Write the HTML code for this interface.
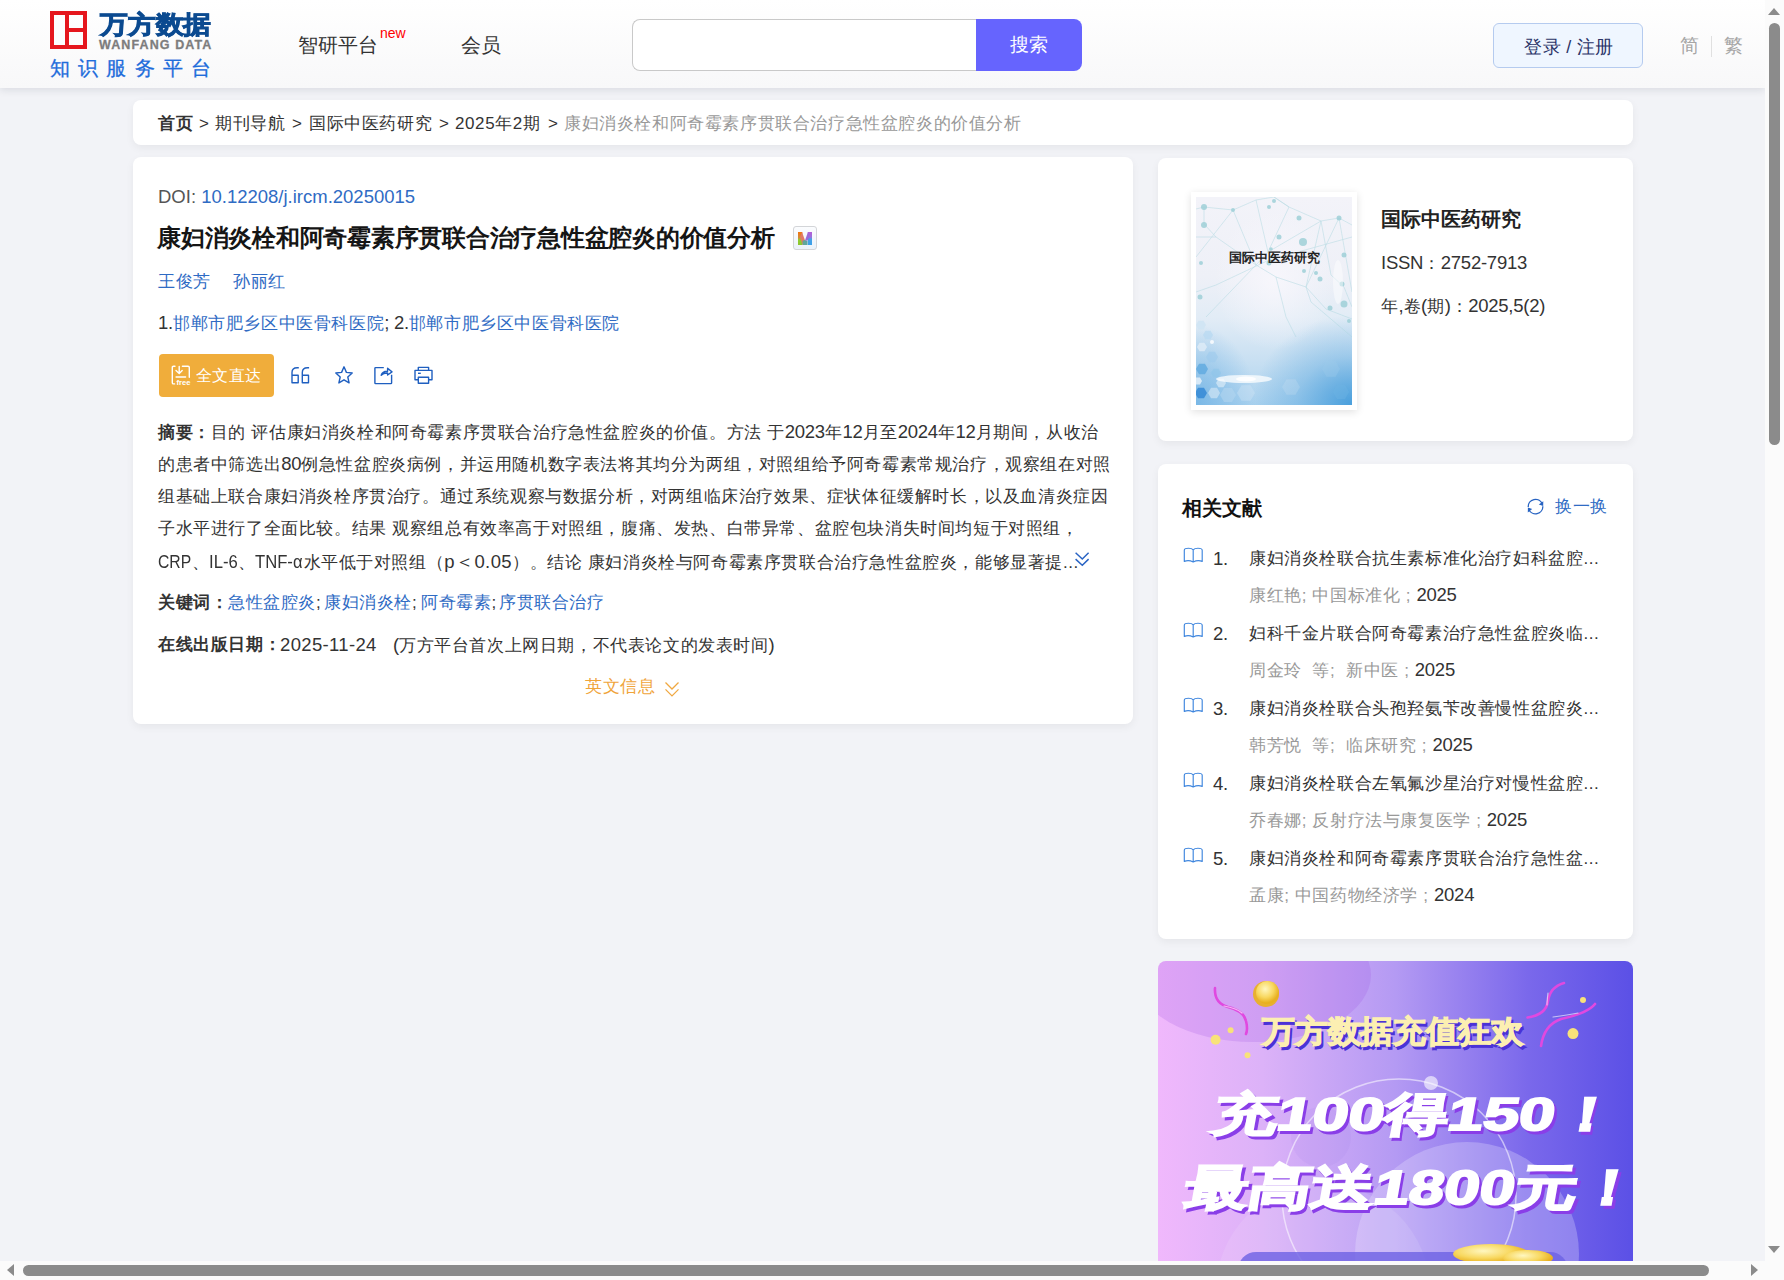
<!DOCTYPE html>
<html><head><meta charset="utf-8">
<style>
*{box-sizing:border-box;margin:0;padding:0}
html,body{width:1784px;height:1280px;overflow:hidden;background:#fbfbfb}
body{font-family:"Liberation Sans",sans-serif;color:#333;position:relative}
#vp{position:absolute;left:0;top:0;width:1765px;height:1261px;overflow:hidden;background:#f2f3f7}
.a{position:absolute;white-space:nowrap}
.hdr{position:absolute;left:0;top:0;width:1765px;height:88px;background:linear-gradient(#fff,#f8f8f9);box-shadow:0 2px 8px rgba(20,30,50,.11)}
.card{position:absolute;background:#fff;border-radius:8px;box-shadow:0 3px 8px rgba(0,0,0,.055)}
.blue{color:#2f6bc4}
.gray{color:#999}
.t17{font-size:17px;letter-spacing:.6px;line-height:20px}
.L{font-size:18.5px;letter-spacing:-.25px}
/* scrollbars */
.sbv{position:absolute;left:1765px;top:0;width:19px;height:1261px;background:#fbfbfb}
.sbh{position:absolute;left:0;top:1261px;width:1765px;height:19px;background:#fbfbfb}
.thumb{position:absolute;background:#8b8b8b;border-radius:6px}
</style></head><body>
<div id="vp">
  <div class="hdr">
    <!-- logo -->
    <div class="a" style="left:50px;top:11px;width:37px;height:38px;border:4px solid #e5161d"></div>
    <div class="a" style="left:65px;top:11px;width:4px;height:38px;background:#e5161d"></div>
    <div class="a" style="left:65px;top:28px;width:22px;height:4px;background:#e5161d"></div>
    <div class="a" style="left:100px;top:8px;font-size:28px;line-height:30px;font-weight:900;color:#0b4a90;letter-spacing:-.2px;-webkit-text-stroke:1px #0b4a90;transform:scaleY(.9);transform-origin:0 100%">万方数据</div>
    <div class="a" style="left:99px;top:38px;font-size:12.5px;line-height:14px;font-weight:bold;color:#7d7d7d;letter-spacing:1.1px;-webkit-text-stroke:.3px #7d7d7d">WANFANG DATA</div>
    <div class="a" style="left:50px;top:57px;font-size:20px;line-height:22px;color:#1f6ddb;letter-spacing:8.2px;-webkit-text-stroke:.3px #1f6ddb">知识服务平台</div>
    <!-- nav -->
    <div class="a" style="left:298px;top:34px;font-size:20px;line-height:22px;color:#333">智研平台</div>
    <div class="a" style="left:380px;top:26px;font-size:14px;line-height:14px;color:#f00">new</div>
    <div class="a" style="left:461px;top:34px;font-size:20px;line-height:22px;color:#333">会员</div>
    <!-- search -->
    <div class="a" style="left:632px;top:19px;width:346px;height:52px;border:1px solid #c9c9c9;border-right:none;border-radius:8px 0 0 8px;background:#fff"></div>
    <div class="a" style="left:976px;top:19px;width:106px;height:52px;border-radius:0 8px 8px 0;background:#6664fe;color:#fff;font-size:19px;line-height:52px;text-align:center">搜索</div>
    <!-- login -->
    <div class="a" style="left:1493px;top:23px;width:150px;height:45px;border:1px solid #b5cbef;border-radius:6px;background:#eff6ff;color:#2b3468;font-size:18px;line-height:46px;text-align:center;letter-spacing:.3px;padding-left:2px">登录 / 注册</div>
    <div class="a" style="left:1680px;top:35px;font-size:19px;line-height:21px;color:#a6a6a6">简</div>
    <div class="a" style="left:1711px;top:36px;width:1px;height:21px;background:#e0e0e0"></div>
    <div class="a" style="left:1724px;top:35px;font-size:19px;line-height:21px;color:#a6a6a6">繁</div>
  </div>

  <!-- breadcrumb -->
  <div class="card" style="left:133px;top:100px;width:1500px;height:45px"></div>
  <div class="a t17" style="left:158px;top:114px"><b>首页</b></div>
  <div class="a t17" style="left:199px;top:114px">&gt;</div>
  <div class="a t17" style="left:215px;top:114px">期刊导航</div>
  <div class="a t17" style="left:292px;top:114px">&gt;</div>
  <div class="a t17" style="left:309px;top:114px">国际中医药研究</div>
  <div class="a t17" style="left:439px;top:114px">&gt;</div>
  <div class="a t17" style="left:455px;top:114px">2025年2期</div>
  <div class="a t17" style="left:548px;top:114px">&gt;</div>
  <div class="a t17 gray" style="left:564px;top:114px">康妇消炎栓和阿奇霉素序贯联合治疗急性盆腔炎的价值分析</div>

  <!-- main card -->
  <div class="card" style="left:133px;top:157px;width:1000px;height:567px"></div>
  <div class="a t17" style="left:158px;top:187px;color:#555"><span class="L" style="letter-spacing:0">DOI: <span class="blue">10.12208/j.ircm.20250015</span></span></div>
  <div class="a" style="left:157px;top:224px;font-size:24px;line-height:28px;font-weight:bold;color:#151515;letter-spacing:-.24px">康妇消炎栓和阿奇霉素序贯联合治疗急性盆腔炎的价值分析</div>
  <div class="a t17 blue" style="left:158px;top:272px">王俊芳</div>
  <div class="a t17 blue" style="left:233px;top:272px">孙丽红</div>
  <div class="a t17" style="left:158px;top:313px"><span class="L">1.</span><span class="blue">邯郸市肥乡区中医骨科医院</span><span class="L">; 2.</span><span class="blue">邯郸市肥乡区中医骨科医院</span></div>
  <div class="a" style="left:159px;top:354px;width:115px;height:43px;background:#f0ad3b;border-radius:4px"></div>
  <div class="a" style="left:196px;top:367px;color:#fff;font-size:16px;line-height:18px;letter-spacing:.3px">全文直达</div>
  <svg class="a" style="left:171px;top:365px" width="24" height="22" viewBox="0 0 24 22"><g fill="none" stroke="#fff" stroke-width="1.4" stroke-linecap="round"><path d="M4 1.3 L2.5 1.3 Q1.3 1.3 1.3 2.5 L1.3 17.7 Q1.3 18.9 2.5 18.9 L3.6 18.9"/><path d="M11.4 1.3 L17 1.3 Q18.3 1.3 18.3 2.6 L18.3 12.2"/><path d="M8.2 1.5 L8.2 8.6 M5 5.6 L8.2 8.6 L11.2 5.6"/><path d="M5.1 12 L14.6 12"/></g><text x="5.6" y="19.9" font-size="7.6" font-weight="bold" fill="#fff" font-family="Liberation Sans">free</text></svg>
  <svg class="a" style="left:290px;top:366px" width="21" height="19" viewBox="0 0 21 19"><g fill="none" stroke="#1f5fc0" stroke-width="1.4" stroke-linejoin="round"><path d="M8.8 1.8 L7.2 1.8 Q2 1.8 2 6.6 L2 16.8 L8.2 16.8 L8.2 9.3 L2 9.3"/><path d="M19.1 1.8 L17.5 1.8 Q12.3 1.8 12.3 6.6 L12.3 16.8 L18.5 16.8 L18.5 9.3 L12.3 9.3"/></g></svg>
  <svg class="a" style="left:334px;top:365px" width="20" height="20" viewBox="0 0 20 20"><path d="M10 1.8 L12.4 7.4 L18.2 8 L13.8 12 L15.1 17.9 L10 14.8 L4.9 17.9 L6.2 12 L1.8 8 L7.6 7.4 Z" fill="none" stroke="#1f5fc0" stroke-width="1.4" stroke-linejoin="round"/></svg>
  <svg class="a" style="left:373px;top:365px" width="21" height="20" viewBox="0 0 21 20"><g fill="none" stroke="#1f5fc0" stroke-width="1.4" stroke-linejoin="round"><path d="M10.8 2.6 L2.6 2.6 Q1.9 2.6 1.9 3.3 L1.9 17.9 Q1.9 18.6 2.6 18.6 L17.9 18.6 Q18.6 18.6 18.6 17.9 L18.6 9.8"/><path d="M8.2 10.2 Q9.5 6 14.6 6.2 L14.6 3.2 L19 6.9 L14.6 10 L14.6 8 Q10.5 7.8 8.2 10.2 Z"/></g></svg>
  <svg class="a" style="left:413px;top:365px" width="21" height="20" viewBox="0 0 21 20"><g fill="none" stroke="#1f5fc0" stroke-width="1.4" stroke-linejoin="round"><path d="M5.3 5 L5.3 2.4 L15.6 2.4 L15.6 5"/><path d="M5 14.8 L2 14.8 L2 5.4 L19 5.4 L19 14.8 L16 14.8"/><rect x="5.3" y="12.2" width="10.3" height="6"/><path d="M5 8.3 L7.8 8.3"/></g></svg>
  <div class="a" style="left:793px;top:226px;width:24px;height:24px;border:1.5px solid #d3d5d8;border-radius:3px;background:linear-gradient(#fbfcfe,#ebf2fa)"></div>
  <svg class="a" style="left:797px;top:231px" width="16" height="15" viewBox="0 0 16 15"><defs><linearGradient id="ml" x1="0" y1="0" x2="0" y2="1"><stop offset="0" stop-color="#f2740f"/><stop offset=".45" stop-color="#d08a3a"/><stop offset=".6" stop-color="#8fcf2e"/><stop offset="1" stop-color="#8cc430"/></linearGradient><linearGradient id="mr" x1="0" y1="0" x2="0" y2="1"><stop offset="0" stop-color="#b45ed8"/><stop offset=".4" stop-color="#9a70dc"/><stop offset=".55" stop-color="#48a0e4"/><stop offset="1" stop-color="#3aa0ea"/></linearGradient></defs><path d="M1 1 L5.3 1 L5.3 14 L1 14Z" fill="url(#ml)"/><path d="M5 1 L8 9.5 L8 14 L5.5 14 L3 6Z" fill="#e07b66"/><path d="M5.6 14 L5.6 9.8 L8 9 L10.5 9.8 L10.5 14Z" fill="#5ea69c"/><path d="M10.8 1 L15 1 L15 14 L10.8 14Z" fill="url(#mr)"/><path d="M11 1 L8 9.5 L10.6 9.5 L12.5 5Z" fill="#9a6ad8"/></svg>
  <div class="a t17" style="left:158px;top:422px"><b>摘要：</b>目的 评估康妇消炎栓和阿奇霉素序贯联合治疗急性盆腔炎的价值。方法 于<span class="L">2023</span>年<span class="L">12</span>月至<span class="L">2024</span>年<span class="L">12</span>月期间，从收治</div>
  <div class="a t17" style="left:158px;top:454px">的患者中筛选出<span class="L">80</span>例急性盆腔炎病例，并运用随机数字表法将其均分为两组，对照组给予阿奇霉素常规治疗，观察组在对照</div>
  <div class="a t17" style="left:158px;top:487px">组基础上联合康妇消炎栓序贯治疗。通过系统观察与数据分析，对两组临床治疗效果、症状体征缓解时长，以及血清炎症因</div>
  <div class="a t17" style="left:158px;top:519px">子水平进行了全面比较。结果 观察组总有效率高于对照组，腹痛、发热、白带异常、盆腔包块消失时间均短于对照组，</div>
  <div class="a t17" style="left:158px;top:552px"><span class="L" style="letter-spacing:0;display:inline-block;transform:scaleX(.85);transform-origin:0 50%;margin-right:-5.5px">CRP</span>、<span class="L" style="letter-spacing:0;display:inline-block;transform:scaleX(.9);transform-origin:0 50%;margin-right:-3.5px">IL-6</span>、<span class="L" style="letter-spacing:0;display:inline-block;transform:scaleX(.9);transform-origin:0 50%;margin-right:-4.5px">TNF-α</span>水平低于对照组（<span class="L" style="letter-spacing:.4px">p＜0.05</span>）。结论 康妇消炎栓与阿奇霉素序贯联合治疗急性盆腔炎，能够显著提...</div>
  <div class="a t17" style="left:158px;top:593px"><b>关键词：</b></div>
  <div class="a t17" style="left:228px;top:593px"><span class="blue">急性盆腔炎</span>;</div>
  <div class="a t17" style="left:324px;top:593px"><span class="blue">康妇消炎栓</span>;</div>
  <div class="a t17" style="left:421px;top:593px"><span class="blue">阿奇霉素</span>;</div>
  <div class="a t17 blue" style="left:499px;top:593px">序贯联合治疗</div>
  <div class="a t17" style="left:158px;top:635px"><b>在线出版日期：</b></div>
  <div class="a t17" style="left:280px;top:635px"><span class="L" style="letter-spacing:.35px">2025-11-24</span></div>
  <div class="a t17" style="left:393px;top:635px"><span class="L">(</span>万方平台首次上网日期，不代表论文的发表时间<span class="L">)</span></div>
  <div class="a t17" style="left:585px;top:677px;color:#f0a43a">英文信息</div>
  <svg class="a" style="left:664px;top:681px" width="16" height="17" viewBox="0 0 16 17"><path d="M1.5 1.5 L8 8 L14.5 1.5 M1.5 8.4 L8 14.9 L14.5 8.4" fill="none" stroke="#f0a840" stroke-width="1.3"/></svg>
  <svg class="a" style="left:1074px;top:551px" width="16" height="17" viewBox="0 0 16 17"><path d="M1.6 1.8 L8.3 8 L14.6 1.8 M1.6 8.1 L8.3 14.3 L14.6 8.1" fill="none" stroke="#2a64c4" stroke-width="1.5"/></svg>

  <!-- right card 1 -->
  <div class="card" style="left:1158px;top:158px;width:475px;height:283px"></div>
  <div class="a" style="left:1191px;top:192px;width:166px;height:218px;background:#fff;box-shadow:0 2px 8px rgba(0,0,0,.12)"></div>
  <div class="a" style="left:1196px;top:197px;width:156px;height:208px;overflow:hidden;background:radial-gradient(ellipse 60px 70px at 50% 40%,rgba(248,247,252,.9) 0%,rgba(248,247,252,0) 100%),radial-gradient(ellipse 100px 90px at 100% 100%,#4a9fdc 0%,rgba(74,159,220,.35) 55%,rgba(74,159,220,0) 100%),radial-gradient(ellipse 60px 80px at 0% 100%,#7ab8e6 0%,rgba(122,184,230,0) 100%),linear-gradient(180deg,#f3f3f9 0%,#eef0f7 38%,#e2ecf6 58%,#c9e0f2 78%,#a9d1ee 100%)">
    <svg width="156" height="208" style="position:absolute;left:0;top:0">
      <g stroke="#a9d5de" stroke-width=".6" fill="none" opacity=".75">
        <path d="M0 12 L8 10 L37 13 L60 3 L78 0 L93 10 L125 24 L143 21 L156 28"/>
        <path d="M8 10 L8 27 L20 40 L60 68 L80 80 L110 90 L130 112 L156 122"/>
        <path d="M37 13 L60 68 L72 55 L93 10 M60 3 L72 55 L125 24 L110 90 L143 21 L156 95"/>
        <path d="M0 95 L20 88 L73 63 L156 40 M0 40 L20 40 M93 10 L78 0"/>
        <path d="M10 120 L60 68 M80 80 L90 120 L100 140 M110 90 L115 105 L156 140"/>
        <path d="M125 24 L135 78 L148 90 L156 110 M0 60 L37 13"/>
      </g>
      <g fill="#9fd0d8" opacity=".85">
        <circle cx="8" cy="10" r="3"/><circle cx="37" cy="13" r="2"/><circle cx="73" cy="10" r="2"/><circle cx="78" cy="4" r="2"/><circle cx="103" cy="21" r="2.5"/>
        <circle cx="143" cy="21" r="2.5"/><circle cx="8" cy="28" r="3"/><circle cx="83" cy="40" r="2.5"/><circle cx="107" cy="45" r="4"/><circle cx="75" cy="52" r="1.8"/>
        <circle cx="47" cy="58" r="2"/><circle cx="73" cy="66" r="2.5"/><circle cx="108" cy="74" r="2"/><circle cx="120" cy="76" r="2"/><circle cx="124" cy="82" r="2.5"/>
        <circle cx="148" cy="58" r="2.5"/><circle cx="146" cy="87" r="2.5"/><circle cx="4" cy="100" r="2.5"/><circle cx="148" cy="107" r="3.5"/><circle cx="134" cy="111" r="2.5"/>
        <circle cx="153" cy="124" r="2"/><circle cx="5" cy="66" r="2"/>
      </g>
      <g><polygon points="10.0,128.0 7.5,132.3 2.5,132.3 0.0,128.0 2.5,123.7 7.5,123.7" fill="#cfe4f4" opacity="0.9"/><polygon points="17.0,138.0 14.5,142.3 9.5,142.3 7.0,138.0 9.5,133.7 14.5,133.7" fill="#b9d9f1" opacity="0.8"/><polygon points="11.0,150.0 8.5,154.3 3.5,154.3 1.0,150.0 3.5,145.7 8.5,145.7" fill="#dbeaf6" opacity="0.9"/><polygon points="22.0,160.0 19.0,165.2 13.0,165.2 10.0,160.0 13.0,154.8 19.0,154.8" fill="#9cc9ec" opacity="0.6"/><polygon points="12.0,172.0 9.0,177.2 3.0,177.2 0.0,172.0 3.0,166.8 9.0,166.8" fill="#5ea9e0" opacity="0.8"/><polygon points="25.0,176.0 22.5,180.3 17.5,180.3 15.0,176.0 17.5,171.7 22.5,171.7" fill="#8ec4ea" opacity="0.6"/><polygon points="11.0,196.0 8.0,201.2 2.0,201.2 -1.0,196.0 2.0,190.8 8.0,190.8" fill="#2f86d4" opacity="0.8"/><polygon points="24.0,196.0 21.0,201.2 15.0,201.2 12.0,196.0 15.0,190.8 21.0,190.8" fill="#cfe4f4" opacity="0.7"/><polygon points="40.0,198.0 36.0,204.9 28.0,204.9 24.0,198.0 28.0,191.1 36.0,191.1" fill="#b7d7ef" opacity="0.5"/><polygon points="59.0,196.0 54.5,203.8 45.5,203.8 41.0,196.0 45.5,188.2 54.5,188.2" fill="#d7e8f5" opacity="0.35"/><polygon points="30.0,186.0 27.5,190.3 22.5,190.3 20.0,186.0 22.5,181.7 27.5,181.7" fill="#e4f0f9" opacity="0.6"/><polygon points="6.0,184.0 4.0,187.5 0.0,187.5 -2.0,184.0 -0.0,180.5 4.0,180.5" fill="#eaf3fa" opacity="0.8"/><polygon points="144.0,172.0 139.5,179.8 130.5,179.8 126.0,172.0 130.5,164.2 139.5,164.2" fill="#9fcbea" opacity="0.35"/><polygon points="153.0,195.0 149.0,201.9 141.0,201.9 137.0,195.0 141.0,188.1 149.0,188.1" fill="#6fb4e4" opacity="0.4"/><polygon points="104.0,190.0 99.5,197.8 90.5,197.8 86.0,190.0 90.5,182.2 99.5,182.2" fill="#cfe4f4" opacity="0.25"/></g>
      <ellipse cx="48" cy="182" rx="28" ry="4" fill="#fff" opacity=".75"/>
      <ellipse cx="50" cy="182" rx="10" ry="2.5" fill="#fff" opacity=".9"/>
      <ellipse cx="142" cy="85" rx="5" ry="22" fill="#fff" opacity=".45"/>
      <circle cx="16" cy="145" r="2" fill="#fff" opacity=".8"/>
    </svg>
    <div class="a" style="left:33px;top:54px;font-size:12.5px;line-height:14px;font-weight:bold;color:#222">国际中医药研究</div>
  </div>
  </div>
  <div class="a" style="left:1381px;top:208px;font-size:20px;line-height:22px;font-weight:bold;color:#222">国际中医药研究</div>
  <div class="a t17" style="left:1381px;top:253px"><span class="L">ISSN</span>：<span class="L">2752-7913</span></div>
  <div class="a t17" style="left:1381px;top:296px">年<span class="L">,</span>卷<span class="L">(</span>期<span class="L">)</span>：<span class="L">2025,5(2)</span></div>

  <!-- right card 2 -->
  <div class="card" style="left:1158px;top:464px;width:475px;height:475px"></div>
  <div class="a" style="left:1182px;top:497px;font-size:20px;line-height:22px;font-weight:bold;color:#111">相关文献</div>
  <svg class="a" style="left:1526px;top:497px" width="19" height="19" viewBox="0 0 19 19"><g fill="none" stroke="#2763c2" stroke-width="1.3"><path d="M2.2 10 A7.3 7.3 0 0 1 16.2 6.8"/><path d="M16.8 9.2 A7.3 7.3 0 0 1 2.8 12.4"/></g><path d="M17.3 4.2 L17.2 9 L12.8 7.6Z M1.8 15.4 L1.9 10.6 L6.2 12Z" fill="#2763c2"/></svg>
  <div class="a t17 blue" style="left:1555px;top:497px">换一换</div>
  <svg class="a" style="left:1183px;top:548px;margin-top:-1px" width="21" height="17" viewBox="0 0 21 17"><path d="M1.3 3.2 Q1.3 1.2 5.5 1.2 Q9 1.2 10.2 2.8 Q11.4 1.2 15 1.2 Q19.2 1.2 19.2 3.2 L19.2 14.4 Q15 12.6 10.2 14.9 Q5.5 12.6 1.3 14.4 Z M10.2 2.8 L10.2 14.9" fill="none" stroke="#3f86de" stroke-width="1.15" stroke-linejoin="round"/></svg>
  <div class="a t17" style="left:1213px;top:549px"><span class="L">1.</span></div>
  <div class="a t17" style="left:1249px;top:549px">康妇消炎栓联合抗生素标准化治疗妇科盆腔...</div>
  <div class="a t17" style="left:1249px;top:585px"><span class="gray">康红艳; 中国标准化 ; </span><span class="L">2025</span></div>
  <svg class="a" style="left:1183px;top:623px;margin-top:-1px" width="21" height="17" viewBox="0 0 21 17"><path d="M1.3 3.2 Q1.3 1.2 5.5 1.2 Q9 1.2 10.2 2.8 Q11.4 1.2 15 1.2 Q19.2 1.2 19.2 3.2 L19.2 14.4 Q15 12.6 10.2 14.9 Q5.5 12.6 1.3 14.4 Z M10.2 2.8 L10.2 14.9" fill="none" stroke="#3f86de" stroke-width="1.15" stroke-linejoin="round"/></svg>
  <div class="a t17" style="left:1213px;top:624px"><span class="L">2.</span></div>
  <div class="a t17" style="left:1249px;top:624px">妇科千金片联合阿奇霉素治疗急性盆腔炎临...</div>
  <div class="a t17" style="left:1249px;top:660px"><span class="gray">周金玲 &nbsp;等; &nbsp;新中医 ; </span><span class="L">2025</span></div>
  <svg class="a" style="left:1183px;top:698px;margin-top:-1px" width="21" height="17" viewBox="0 0 21 17"><path d="M1.3 3.2 Q1.3 1.2 5.5 1.2 Q9 1.2 10.2 2.8 Q11.4 1.2 15 1.2 Q19.2 1.2 19.2 3.2 L19.2 14.4 Q15 12.6 10.2 14.9 Q5.5 12.6 1.3 14.4 Z M10.2 2.8 L10.2 14.9" fill="none" stroke="#3f86de" stroke-width="1.15" stroke-linejoin="round"/></svg>
  <div class="a t17" style="left:1213px;top:699px"><span class="L">3.</span></div>
  <div class="a t17" style="left:1249px;top:699px">康妇消炎栓联合头孢羟氨苄改善慢性盆腔炎...</div>
  <div class="a t17" style="left:1249px;top:735px"><span class="gray">韩芳悦 &nbsp;等; &nbsp;临床研究 ; </span><span class="L">2025</span></div>
  <svg class="a" style="left:1183px;top:773px;margin-top:-1px" width="21" height="17" viewBox="0 0 21 17"><path d="M1.3 3.2 Q1.3 1.2 5.5 1.2 Q9 1.2 10.2 2.8 Q11.4 1.2 15 1.2 Q19.2 1.2 19.2 3.2 L19.2 14.4 Q15 12.6 10.2 14.9 Q5.5 12.6 1.3 14.4 Z M10.2 2.8 L10.2 14.9" fill="none" stroke="#3f86de" stroke-width="1.15" stroke-linejoin="round"/></svg>
  <div class="a t17" style="left:1213px;top:774px"><span class="L">4.</span></div>
  <div class="a t17" style="left:1249px;top:774px">康妇消炎栓联合左氧氟沙星治疗对慢性盆腔...</div>
  <div class="a t17" style="left:1249px;top:810px"><span class="gray">乔春娜; 反射疗法与康复医学 ; </span><span class="L">2025</span></div>
  <svg class="a" style="left:1183px;top:848px;margin-top:-1px" width="21" height="17" viewBox="0 0 21 17"><path d="M1.3 3.2 Q1.3 1.2 5.5 1.2 Q9 1.2 10.2 2.8 Q11.4 1.2 15 1.2 Q19.2 1.2 19.2 3.2 L19.2 14.4 Q15 12.6 10.2 14.9 Q5.5 12.6 1.3 14.4 Z M10.2 2.8 L10.2 14.9" fill="none" stroke="#3f86de" stroke-width="1.15" stroke-linejoin="round"/></svg>
  <div class="a t17" style="left:1213px;top:849px"><span class="L">5.</span></div>
  <div class="a t17" style="left:1249px;top:849px">康妇消炎栓和阿奇霉素序贯联合治疗急性盆...</div>
  <div class="a t17" style="left:1249px;top:885px"><span class="gray">孟康; 中国药物经济学 ; </span><span class="L">2024</span></div>


  <!-- banner -->
  <div class="a" style="left:1158px;top:961px;width:475px;height:320px;border-radius:8px 8px 0 0;overflow:hidden;background:linear-gradient(90deg,#f0b8fc 0%,#dcb2f8 22%,#b49af3 50%,#7a68eb 78%,#5b50e6 100%)">
    <svg width="475" height="320" style="position:absolute;left:0;top:0">
      <defs>
        <radialGradient id="bc1" cx="50%" cy="50%" r="50%"><stop offset="0" stop-color="#fff" stop-opacity=".35"/><stop offset="1" stop-color="#fff" stop-opacity=".12"/></radialGradient>
        <radialGradient id="coin" cx="40%" cy="35%" r="60%"><stop offset="0" stop-color="#fff7c0"/><stop offset=".6" stop-color="#f8d860"/><stop offset="1" stop-color="#e8b020"/></radialGradient>
        <filter id="blur1"><feGaussianBlur stdDeviation=".6"/></filter>
      </defs>
      <ellipse cx="95" cy="14" rx="118" ry="67" fill="#9a50e0" opacity=".2"/>
      <circle cx="309" cy="293" r="112" fill="#eceaff" opacity=".28"/>
      <circle cx="165" cy="330" r="107" fill="#fff" opacity=".1"/><circle cx="163" cy="176" r="30" fill="#9060e0" opacity=".08"/>
      <circle cx="241" cy="235" r="117" fill="none" stroke="#fff" stroke-opacity=".55" stroke-width="1.5"/>
      <circle cx="273" cy="122" r="7" fill="#fff" opacity=".6"/>
      <rect x="80" y="291" width="330" height="40" rx="18" fill="#6d62e4" opacity=".8"/>
      <ellipse cx="333" cy="293" rx="38" ry="10" fill="url(#coin)"/>
      <ellipse cx="370" cy="297" rx="25" ry="8" fill="url(#coin)"/>
      <circle cx="108" cy="33" r="13" fill="#e8b030"/>
      <circle cx="109.5" cy="31.5" r="11.5" fill="url(#coin)"/>
      <g fill="#f8e27a">
        <circle cx="57.6" cy="78.7" r="5"/><circle cx="72.6" cy="69.3" r="3"/><circle cx="89.5" cy="94.2" r="3"/><circle cx="425" cy="39" r="3"/><circle cx="415" cy="72.6" r="5.5"/>
      </g>
      <g fill="none" stroke="#e048e0" stroke-width="2.6" stroke-linecap="round" filter="url(#blur1)">
        <path d="M57 27 Q56 42 70 46 Q86 50 88 60 Q90 68 88 73"/>
        <path d="M406 22 Q392 26 390 40 Q388 54 369.5 56.5"/>
        <path d="M383 85 Q386 64 403 58 Q430 52 437 43"/>
      </g>
      <g fill="none" stroke="#fff" stroke-width="1.2" stroke-linecap="round" opacity=".6">
        <path d="M66 45 Q78 47 84 52"/><path d="M395 56 Q410 54 420 52"/><path d="M390 32 Q389 40 389 44"/>
      </g>
    </svg>
    <svg class="a" style="left:0;top:0" width="475" height="320">
      <g font-family="Liberation Sans" font-weight="900">
        <text x="104" y="81" font-size="31" textLength="262" lengthAdjust="spacingAndGlyphs" fill="#4a32d6" stroke="#4a32d6" stroke-width="1.2" transform="translate(2,3)">万方数据充值狂欢</text>
        <text x="104" y="81" font-size="31" textLength="262" lengthAdjust="spacingAndGlyphs" fill="#fcefb2" stroke="#fcefb2" stroke-width="1.2">万方数据充值狂欢</text>
        <g transform="skewX(-10)">
          <text x="83" y="169" font-size="46" textLength="405" lengthAdjust="spacingAndGlyphs" fill="#8a3ee8" stroke="#8a3ee8" stroke-width="2" transform="translate(3,3)">充100得150！</text>
          <text x="83" y="169" font-size="46" textLength="405" lengthAdjust="spacingAndGlyphs" fill="#fff" stroke="#fff" stroke-width="2">充100得150！</text>
          <text x="68" y="243" font-size="48" textLength="455" lengthAdjust="spacingAndGlyphs" fill="#8a3ee8" stroke="#8a3ee8" stroke-width="2" transform="translate(3,3)">最高送1800元！</text>
          <text x="68" y="243" font-size="48" textLength="455" lengthAdjust="spacingAndGlyphs" fill="#fff" stroke="#fff" stroke-width="2">最高送1800元！</text>
        </g>
      </g>
    </svg>
  </div>
</div>
<!-- scrollbars -->
<div class="sbv">
  <div class="a" style="left:3px;top:8px;width:0;height:0;border-left:6.5px solid transparent;border-right:6.5px solid transparent;border-bottom:7px solid #8b8b8b"></div>
  <div class="thumb" style="left:4px;top:23px;width:11px;height:422px"></div>
  <div class="a" style="left:3px;top:1246px;width:0;height:0;border-left:6.5px solid transparent;border-right:6.5px solid transparent;border-top:7px solid #8b8b8b"></div>
</div>
<div class="sbh">
  <div class="a" style="left:7px;top:3px;width:0;height:0;border-top:6.5px solid transparent;border-bottom:6.5px solid transparent;border-right:7px solid #8b8b8b"></div>
  <div class="thumb" style="left:23px;top:4px;width:1686px;height:11px"></div>
  <div class="a" style="left:1751px;top:3px;width:0;height:0;border-top:6.5px solid transparent;border-bottom:6.5px solid transparent;border-left:7px solid #8b8b8b"></div>
</div>
</body></html>
